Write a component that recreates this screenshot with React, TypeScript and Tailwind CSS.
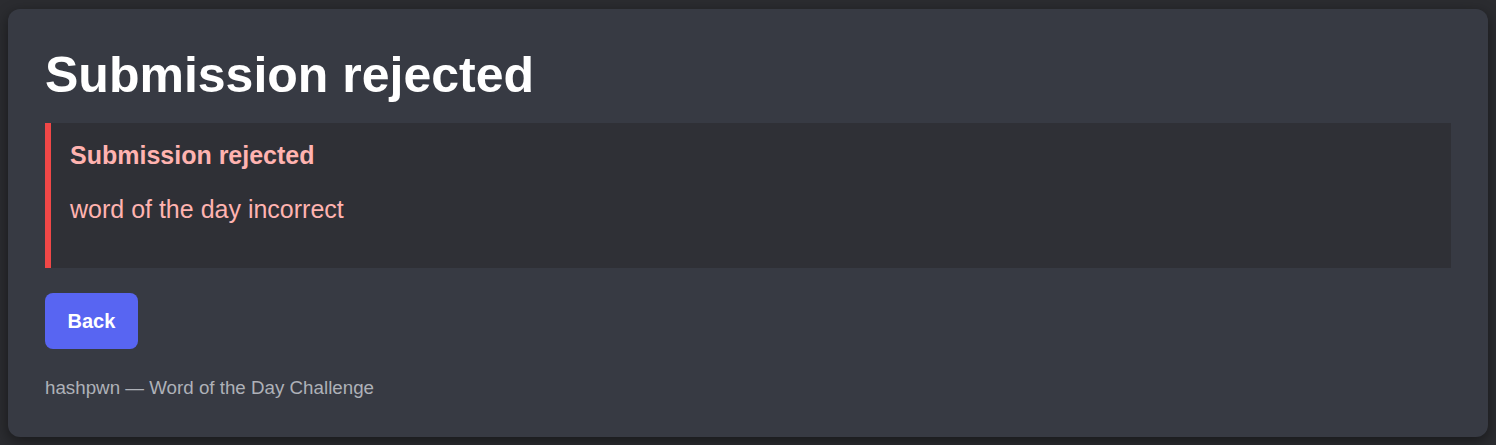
import React from 'react';

const font = { fontFamily: '"Liberation Sans", Arial, sans-serif' };

export default function App() {
  return (
    <div className="min-h-screen bg-[#2b2c30] px-2 pt-[9px] pb-2" style={font}>
      <main className="rounded-xl bg-[#373a43] px-[37px] pt-[36px] pb-[37px] shadow-[0_4px_14px_rgba(0,0,0,0.45)]">
        <h1 className="text-[50px] leading-[1.2] font-bold text-white">Submission rejected</h1>

        <section className="mt-[18px] border-l-[6px] border-[#f04747] bg-[#2f3036] pl-[19px] pr-5 pt-[17px] pb-[44px]">
          <h2 className="text-[25px] leading-[1.2] font-bold text-[#ffb3b0]">Submission rejected</h2>
          <p className="mt-[24px] text-[25px] leading-[1.2] text-[#ffb3b0]">word of the day incorrect</p>
        </section>

        <button className="mt-[25px] flex h-[56px] items-center rounded-lg bg-[#5865f2] px-[22.5px] text-[20px] font-bold text-white">
          Back
        </button>

        <footer className="mt-[28px] text-[18.75px] leading-[1.2] text-[#aeb1b8]">
          hashpwn — Word of the Day Challenge
        </footer>
      </main>
    </div>
  );
}
